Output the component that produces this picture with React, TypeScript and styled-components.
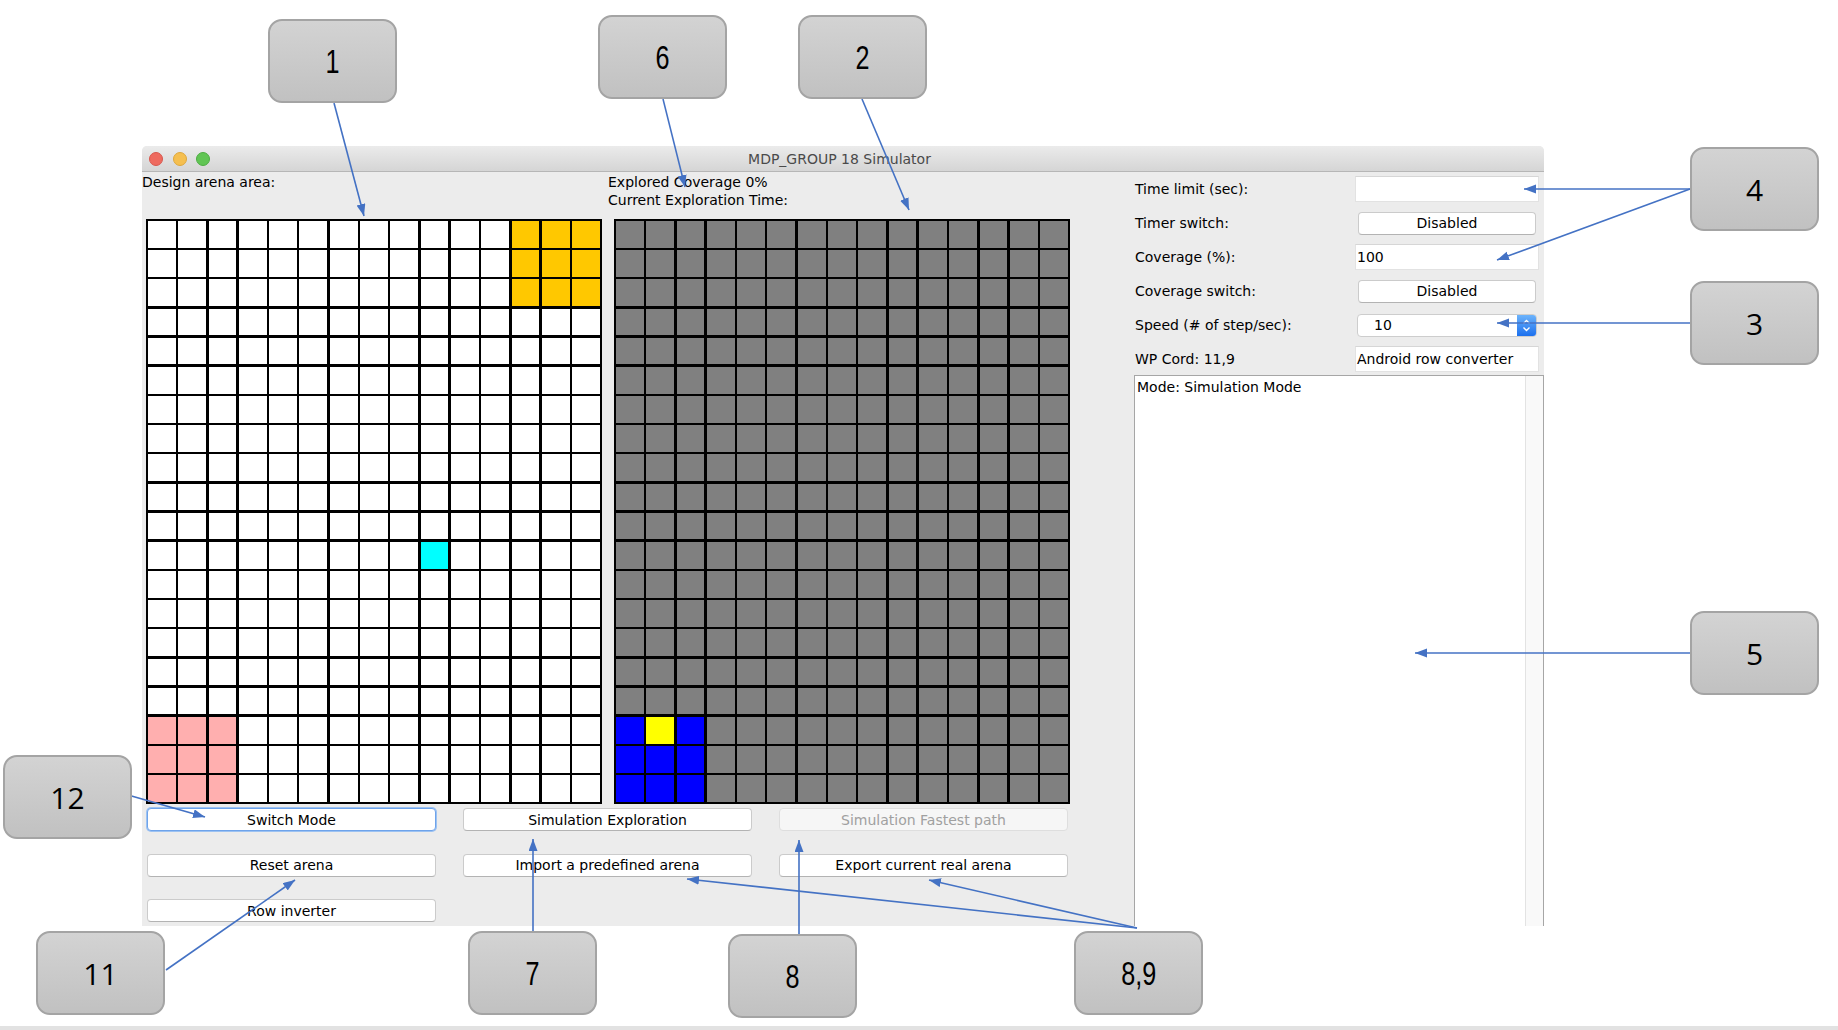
import React from "react";
import styled, { createGlobalStyle } from "styled-components";

const GlobalStyle = createGlobalStyle`
  html, body { margin: 0; padding: 0; background: #ffffff; }
  body { font-family: "DejaVu Sans", "Liberation Sans", sans-serif; }
  * { box-sizing: border-box; }
`;

const Page = styled.div`
  position: relative;
  width: 1838px;
  height: 1030px;
  overflow: hidden;
  background: #ffffff;
  display: flex;
  flex-direction: column;
`;

const Window = styled.div`
  margin: 146px 0 0 142px;
  width: 1402px;
  height: 780px;
  flex: none;
  display: flex;
  flex-direction: column;
  background: #ececec;
  border-radius: 5px 5px 0 0;
  overflow: hidden;
`;

const TitleBar = styled.div`
  height: 26px;
  flex: none;
  display: grid;
  grid-template-columns: 1fr auto 1fr;
  align-items: center;
  padding-left: 7px;
  background: linear-gradient(#ebebeb, #d5d5d5);
  border-bottom: 1px solid #b6b6b6;
`;

const Lights = styled.div`
  display: flex;
  gap: 9.5px;
`;

const Light = styled.span<{ $c: string; $b: string }>`
  width: 14px;
  height: 14px;
  border-radius: 50%;
  background: ${(p) => p.$c};
  border: 1px solid ${(p) => p.$b};
`;

const Title = styled.div`
  font-size: 14px;
  color: #4a4a4a;
  padding-right: 14px;
`;

const Body = styled.div`
  flex: 1;
  display: flex;
  min-height: 0;
`;

const LeftPane = styled.div`
  width: 992px;
  flex: none;
  display: flex;
  flex-direction: column;
`;

const Header = styled.div`
  height: 47px;
  display: grid;
  grid-template-columns: 466px auto;
  padding-top: 1px;
  font-size: 14px;
  line-height: 18px;
  color: #000;
`;

const Arenas = styled.div`
  display: flex;
  gap: 12px;
  padding-left: 4px;
`;

const ArenaGrid = styled.div`
  width: 456px;
  height: 585px;
  display: grid;
  grid-template-columns: repeat(15, 1fr);
  grid-template-rows: repeat(20, 1fr);
  gap: 2.5px;
  padding: 2px;
  background: #000;
`;

const Cell = styled.div<{ $c: string }>`
  background: ${(p) => p.$c};
`;

const ButtonGrid = styled.div`
  display: grid;
  grid-template-columns: repeat(3, 289px);
  grid-auto-rows: 23px;
  column-gap: 27px;
  row-gap: 22.5px;
  margin-top: 4px;
  padding-left: 5px;
`;

const AquaButton = styled.button<{ $focused?: boolean }>`
  height: 23px;
  padding: 0;
  font-family: "DejaVu Sans", "Liberation Sans", sans-serif;
  font-size: 14px;
  color: #000;
  background: #ffffff;
  border: 1px solid #cbcbcb;
  border-bottom-color: #b3b3b3;
  border-radius: 4px;
  text-align: center;
  box-shadow: ${(p) => (p.$focused ? "0 0 0 1px #9cc2f2" : "none")};
  ${(p) => (p.$focused ? "border-color: #6ea3ea;" : "")}
  &:disabled {
    background: #f6f6f6;
    color: #a0a0a0;
    border-color: #dedede;
  }
`;

const RightPanel = styled.div`
  width: 410px;
  flex: none;
  display: flex;
  flex-direction: column;
`;

const Form = styled.div`
  display: grid;
  grid-template-columns: 220px 184px;
  grid-auto-rows: 34px;
  align-items: center;
  padding-left: 1px;
`;

const Label = styled.div`
  font-size: 14px;
  color: #000;
`;

const TextField = styled.div`
  height: 26px;
  background: #fff;
  border: 1px solid #e2e2e2;
  border-top-color: #d6d6d6;
  font-size: 14px;
  color: #000;
  padding: 0 1px;
  display: flex;
  align-items: center;
`;

const ToggleButton = styled(AquaButton)`
  margin: 0 3px;
`;

const Spinner = styled.div`
  margin: 0 2px;
  height: 23px;
  display: flex;
  background: #fff;
  border: 1px solid #cdcdcd;
  border-radius: 4px;
  overflow: hidden;
`;

const SpinnerValue = styled.div`
  flex: 1;
  padding-left: 16px;
  font-size: 14px;
  line-height: 21px;
  color: #000;
`;

const Stepper = styled.div`
  width: 19px;
  background: linear-gradient(#6cb3fb, #1c70ee);
  display: flex;
  align-items: center;
  justify-content: center;
`;

const LogArea = styled.div`
  flex: 1;
  margin-top: -1px;
  display: flex;
  background: #fff;
  border: 1px solid #a6a6a6;
  border-bottom: none;
`;

const LogText = styled.div`
  flex: 1;
  padding: 2px 2px;
  font-size: 14px;
  line-height: 18px;
  color: #000;
`;

const ScrollTrack = styled.div`
  width: 18px;
  background: #f9f9f9;
  border-left: 1px solid #e3e3e3;
`;

const BottomBar = styled.div`
  margin-top: auto;
  height: 4px;
  background: #e2e2e2;
`;

const Overlay = styled.svg`
  position: absolute;
  left: 0;
  top: 0;
  width: 1838px;
  height: 1030px;
  pointer-events: none;
  z-index: 2;
`;

const Callout = styled.div<{ $x: number; $y: number }>`
  position: absolute;
  left: ${(p) => p.$x}px;
  top: ${(p) => p.$y}px;
  width: 129px;
  height: 84px;
  z-index: 3;
  display: flex;
  align-items: center;
  justify-content: center;
  border: 2px solid #a4a4a4;
  border-radius: 14px;
  background: linear-gradient(#d3d3d3, #c1c1c1);
  color: #000;
`;

const CalloutText = styled.span<{ $narrow?: boolean }>`
  display: inline-block;
  font-family: ${(p) =>
    p.$narrow ? '"Liberation Sans", sans-serif' : '"Open Sans", "Liberation Sans", sans-serif'};
  font-size: ${(p) => (p.$narrow ? 34 : 30)}px;
  transform: ${(p) => (p.$narrow ? "scaleX(0.74)" : "none")};
`;

const COLORS: Record<string, string> = {
  w: "#ffffff",
  o: "#ffc800",
  p: "#ffafaf",
  c: "#00ffff",
  g: "#808080",
  b: "#0000ff",
  y: "#ffff00",
};

const ROWS = 20;
const COLS = 15;

function designCell(r: number, c: number): string {
  if (r <= 2 && c >= 12) return "o";
  if (r >= 17 && c <= 2) return "p";
  if (r === 11 && c === 9) return "c";
  return "w";
}

function exploreCell(r: number, c: number): string {
  if (r === 17 && c === 1) return "y";
  if (r >= 17 && c <= 2) return "b";
  return "g";
}

const Arena: React.FC<{ kind: (r: number, c: number) => string }> = ({ kind }) => {
  const cells: React.ReactNode[] = [];
  for (let r = 0; r < ROWS; r++) {
    for (let c = 0; c < COLS; c++) {
      cells.push(<Cell key={`${r}-${c}`} $c={COLORS[kind(r, c)]} />);
    }
  }
  return <ArenaGrid>{cells}</ArenaGrid>;
};

const ARROWS: [number, number, number, number][] = [
  [334, 103, 364, 216],
  [663, 99, 685, 187],
  [862, 99, 909, 210],
  [1690, 189, 1524, 189],
  [1690, 189, 1497, 260],
  [1690, 323, 1497, 323],
  [1690, 653, 1415, 653],
  [128, 795, 205, 817],
  [166, 970, 295, 880],
  [533, 931, 533, 839],
  [799, 934, 799, 840],
  [1137, 928, 687, 879],
  [1137, 928, 929, 880],
];

const CALLOUTS: { t: string; x: number; y: number; n?: boolean }[] = [
  { t: "1", x: 268, y: 19, n: true },
  { t: "6", x: 598, y: 15, n: true },
  { t: "2", x: 798, y: 15, n: true },
  { t: "4", x: 1690, y: 147 },
  { t: "3", x: 1690, y: 281 },
  { t: "5", x: 1690, y: 611 },
  { t: "12", x: 3, y: 755 },
  { t: "11", x: 36, y: 931 },
  { t: "7", x: 468, y: 931, n: true },
  { t: "8", x: 728, y: 934, n: true },
  { t: "8,9", x: 1074, y: 931, n: true },
];

export default function App() {
  return (
    <>
      <GlobalStyle />
      <Page>
        <Window>
          <TitleBar>
            <Lights>
              <Light $c="#ee6a5f" $b="#d8574d" />
              <Light $c="#f5bf4f" $b="#dea73b" />
              <Light $c="#61c554" $b="#4dad42" />
            </Lights>
            <Title>MDP_GROUP 18 Simulator</Title>
            <div />
          </TitleBar>
          <Body>
            <LeftPane>
              <Header>
                <div>Design arena area:</div>
                <div>
                  Explored Coverage 0%
                  <br />
                  Current Exploration Time:
                </div>
              </Header>
              <Arenas>
                <Arena kind={designCell} />
                <Arena kind={exploreCell} />
              </Arenas>
              <ButtonGrid>
                <AquaButton $focused>Switch Mode</AquaButton>
                <AquaButton>Simulation Exploration</AquaButton>
                <AquaButton disabled>Simulation Fastest path</AquaButton>
                <AquaButton>Reset arena</AquaButton>
                <AquaButton>Import a predefined arena</AquaButton>
                <AquaButton>Export current real arena</AquaButton>
                <AquaButton>Row inverter</AquaButton>
              </ButtonGrid>
            </LeftPane>
            <RightPanel>
              <Form>
                <Label>Time limit (sec):</Label>
                <TextField />
                <Label>Timer switch:</Label>
                <ToggleButton>Disabled</ToggleButton>
                <Label>Coverage (%):</Label>
                <TextField>100</TextField>
                <Label>Coverage switch:</Label>
                <ToggleButton>Disabled</ToggleButton>
                <Label>Speed (# of step/sec):</Label>
                <Spinner>
                  <SpinnerValue>10</SpinnerValue>
                  <Stepper>
                    <svg width="9" height="15" viewBox="0 0 9 15">
                      <path d="M1.5 5.5 L4.5 2.5 L7.5 5.5" fill="none" stroke="#fff" strokeWidth="1.4" />
                      <path d="M1.5 9.5 L4.5 12.5 L7.5 9.5" fill="none" stroke="#fff" strokeWidth="1.4" />
                    </svg>
                  </Stepper>
                </Spinner>
                <Label>WP Cord: 11,9</Label>
                <TextField>Android row converter</TextField>
              </Form>
              <LogArea>
                <LogText>Mode: Simulation Mode</LogText>
                <ScrollTrack />
              </LogArea>
            </RightPanel>
          </Body>
        </Window>
        <BottomBar />
        <Overlay viewBox="0 0 1838 1030">
          <defs>
            <marker id="ah" markerUnits="userSpaceOnUse" markerWidth="13" markerHeight="10" refX="12" refY="4.5" orient="auto">
              <path d="M0,0 L12,4.5 L0,9 z" fill="#4472c4" />
            </marker>
          </defs>
          {ARROWS.map(([x1, y1, x2, y2], i) => (
            <line key={i} x1={x1} y1={y1} x2={x2} y2={y2} stroke="#4472c4" strokeWidth="1.6" markerEnd="url(#ah)" />
          ))}
        </Overlay>
        {CALLOUTS.map((c) => (
          <Callout key={c.t} $x={c.x} $y={c.y}>
            <CalloutText $narrow={c.n}>{c.t}</CalloutText>
          </Callout>
        ))}
      </Page>
    </>
  );
}
